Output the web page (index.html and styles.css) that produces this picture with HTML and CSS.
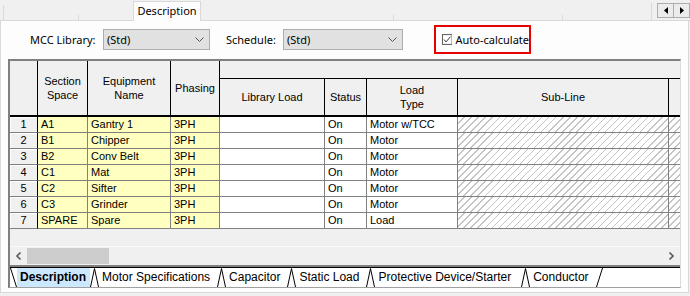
FILE: index.html
```html
<!DOCTYPE html>
<html lang="en">
<head>
    <meta charset="UTF-8">
    <title>MCC Description</title>
    <link rel="stylesheet" href="styles.css">
</head>
<body>

<div class="tabbar">
    <span class="ghost g1"></span>
    <span class="ghost g2"></span>
    <span class="ghost g3"></span>
    <span class="tab-active">Description</span>
    <span class="ghost g4"></span>
    <span class="ghost g5"></span>
    <span class="ghost g6"></span>
    <span class="ghost filler"></span>
    <div class="tab-scroll">
        <span class="sbtn"><svg width="4" height="7" viewBox="0 0 4 7"><path d="M4 0 L0 3.5 L4 7 Z" fill="#000"/></svg></span>
        <span class="sbtn"><svg width="4" height="7" viewBox="0 0 4 7"><path d="M0 0 L4 3.5 L0 7 Z" fill="#000"/></svg></span>
    </div>
</div>

<div class="panel">
    <div class="toolbar">
        <label class="lbl lbl-mcc">MCC Library:</label>
        <div class="combo combo-mcc">
            <span>(Std)</span>
            <svg width="9" height="5" viewBox="0 0 9 5"><polyline points="0.5,0.5 4.5,4.5 8.5,0.5" fill="none" stroke="#555" stroke-width="1"/></svg>
        </div>
        <label class="lbl lbl-sched">Schedule:</label>
        <div class="combo combo-sched">
            <span>(Std)</span>
            <svg width="9" height="5" viewBox="0 0 9 5"><polyline points="0.5,0.5 4.5,4.5 8.5,0.5" fill="none" stroke="#555" stroke-width="1"/></svg>
        </div>
        <div class="auto">
            <svg class="check" width="13" height="13" viewBox="0 0 13 13">
                <rect x="0.5" y="0.5" width="12" height="12" fill="#fff" stroke="#333"/>
                <polyline points="2.5,6.5 5,9.5 10.5,3" fill="none" stroke="#333" stroke-width="1.2"/>
            </svg>
            <span>Auto-calculate</span>
        </div>
    </div>

    <div class="grid">
        <div class="table-area">
            <div class="sheet">
                <div class="hd tall"></div>
                <div class="hd tall">Section<br>Space</div>
                <div class="hd tall">Equipment<br>Name</div>
                <div class="hd tall">Phasing</div>
                <div class="hd group"></div>
                <div class="hd low">Library Load</div>
                <div class="hd low">Status</div>
                <div class="hd low">Load<br>Type</div>
                <div class="hd low">Sub-Line</div>
                <div class="hd low last"></div>

                <div class="cell rn">1</div><div class="cell yl">A1</div><div class="cell yl">Gantry 1</div><div class="cell yl">3PH</div><div class="cell wh"></div><div class="cell wh">On</div><div class="cell wh">Motor w/TCC</div><div class="cell hatch"></div><div class="cell hatch last"></div>
                <div class="cell rn">2</div><div class="cell yl">B1</div><div class="cell yl">Chipper</div><div class="cell yl">3PH</div><div class="cell wh"></div><div class="cell wh">On</div><div class="cell wh">Motor</div><div class="cell hatch"></div><div class="cell hatch last"></div>
                <div class="cell rn">3</div><div class="cell yl">B2</div><div class="cell yl">Conv Belt</div><div class="cell yl">3PH</div><div class="cell wh"></div><div class="cell wh">On</div><div class="cell wh">Motor</div><div class="cell hatch"></div><div class="cell hatch last"></div>
                <div class="cell rn">4</div><div class="cell yl">C1</div><div class="cell yl">Mat</div><div class="cell yl">3PH</div><div class="cell wh"></div><div class="cell wh">On</div><div class="cell wh">Motor</div><div class="cell hatch"></div><div class="cell hatch last"></div>
                <div class="cell rn">5</div><div class="cell yl">C2</div><div class="cell yl">Sifter</div><div class="cell yl">3PH</div><div class="cell wh"></div><div class="cell wh">On</div><div class="cell wh">Motor</div><div class="cell hatch"></div><div class="cell hatch last"></div>
                <div class="cell rn">6</div><div class="cell yl">C3</div><div class="cell yl">Grinder</div><div class="cell yl">3PH</div><div class="cell wh"></div><div class="cell wh">On</div><div class="cell wh">Motor</div><div class="cell hatch"></div><div class="cell hatch last"></div>
                <div class="cell rn">7</div><div class="cell yl">SPARE</div><div class="cell yl">Spare</div><div class="cell yl">3PH</div><div class="cell wh"></div><div class="cell wh">On</div><div class="cell wh">Load</div><div class="cell hatch"></div><div class="cell hatch last"></div>
            </div>
        </div>

        <div class="hscroll">
            <span class="sb-btn"><svg width="5" height="8" viewBox="0 0 5 8"><polyline points="4.5,0.5 1,4 4.5,7.5" fill="none" stroke="#606060" stroke-width="1.6"/></svg></span>
            <div class="sb-track"><div class="sb-thumb"></div></div>
            <span class="sb-btn"><svg width="5" height="8" viewBox="0 0 5 8"><polyline points="0.5,0.5 4,4 0.5,7.5" fill="none" stroke="#606060" stroke-width="1.6"/></svg></span>
        </div>

        <div class="tabstrip">
            <div class="tabs">
                <svg class="sep" width="7" height="19" viewBox="0 0 7 19"><line x1="0.5" y1="0" x2="6.5" y2="19" stroke="#000"/></svg>
                <span class="stab active">Description</span>
                <svg class="sep" width="9" height="19" viewBox="0 0 9 19"><polyline points="0.5,19 4.5,0.5 8.5,19" fill="none" stroke="#000"/></svg>
                <span class="stab">Motor Specifications</span>
                <svg class="sep" width="9" height="19" viewBox="0 0 9 19"><polyline points="0.5,19 4.5,0.5 8.5,19" fill="none" stroke="#000"/></svg>
                <span class="stab">Capacitor</span>
                <svg class="sep" width="9" height="19" viewBox="0 0 9 19"><polyline points="0.5,19 4.5,0.5 8.5,19" fill="none" stroke="#000"/></svg>
                <span class="stab">Static Load</span>
                <svg class="sep" width="9" height="19" viewBox="0 0 9 19"><polyline points="0.5,19 4.5,0.5 8.5,19" fill="none" stroke="#000"/></svg>
                <span class="stab wide">Protective Device/Starter</span>
                <svg class="sep" width="9" height="19" viewBox="0 0 9 19"><polyline points="0.5,19 4.5,0.5 8.5,19" fill="none" stroke="#000"/></svg>
                <span class="stab">Conductor</span>
                <svg class="sep" width="8" height="19" viewBox="0 0 8 19"><line x1="0.5" y1="19" x2="6.5" y2="0" stroke="#000"/></svg>
            </div>
        </div>
    </div>
</div>

</body>
</html>
```

FILE: styles.css
```css
* {
    box-sizing: border-box;
}

body {
    margin: 0;
    width: 690px;
    height: 296px;
    overflow: hidden;
    background: #f0f0f0;
    font-family: "Noto Sans", sans-serif;
    font-size: 11px;
    color: #000;
}

/* top tab row */
.tabbar {
    display: flex;
    align-items: flex-end;
    height: 21px;
}

.ghost {
    border-bottom: 1px solid #d9d9d9;
    border-right: 1px solid #dadada;
}

.g1 { width: 4px; height: 16px; }
.g2 { width: 75px; height: 6px; }
.g3 { width: 54px; height: 1px; border-right: none; }
.g4 { width: 193px; height: 6px; }
.g5 { width: 169px; height: 6px; }
.g6 { width: 89px; height: 18px; }
.filler { flex: 1; height: 1px; border-right: none; }

.tab-active {
    width: 68px;
    height: 20px;
    background: #fdfdfd;
    border: 1px solid #d9d9d9;
    border-bottom: none;
    text-align: center;
    line-height: 18px;
}

.tab-scroll {
    display: flex;
    height: 21px;
    padding-top: 3px;
    border-bottom: 1px solid #d9d9d9;
}

.sbtn {
    display: flex;
    align-items: center;
    justify-content: center;
    width: 17px;
    height: 15px;
    background: #ececec;
    border: 1px solid #adadad;
}

.sbtn + .sbtn {
    margin-left: -1px;
}

/* page */
.panel {
    width: 689px;
    height: 272px;
    background: #fdfdfd;
    border: 1px solid #d9d9d9;
    border-top: none;
    padding-top: 4px;
}

.toolbar {
    display: flex;
    align-items: center;
    height: 29px;
    padding-left: 29px;
}

.lbl-mcc { width: 73px; }
.lbl-sched { width: 57px; margin-left: 16px; }

.combo {
    display: flex;
    align-items: center;
    justify-content: space-between;
    height: 21px;
    padding: 0 5px 0 3px;
    background: #e1e1e1;
    border: 1px solid #adadad;
}

.combo-mcc { width: 107px; }
.combo-sched { width: 120px; }

.auto {
    display: flex;
    align-items: center;
    gap: 3px;
    width: 97px;
    height: 29px;
    margin-left: 31px;
    padding-left: 6px;
    border: 2px solid #e60000;
    white-space: nowrap;
}

/* grid */
.grid {
    display: flex;
    flex-direction: column;
    width: 673px;
    height: 229px;
    margin: 5px 0 0 7px;
    border-top: 2px solid #808080;
    border-left: 2px solid #808080;
    border-right: 1px solid #dcdcdc;
    border-bottom: 1px solid #a0a0a0;
    background: #f0f0f0;
    font-family: "Liberation Sans", Arial, sans-serif;
}

.table-area {
    flex: 1;
}

.sheet {
    display: grid;
    grid-template-columns: 28px 50px 83px 49px 105px 42px 91px 211px 11px;
    grid-template-rows: 18px 38px repeat(7, 16px);
}

.hd {
    display: flex;
    align-items: center;
    justify-content: center;
    text-align: center;
    line-height: 14px;
    background: #f0f0f0;
    border-right: 1px solid #000;
    border-bottom: 2px solid #000;
}

.hd.tall { grid-row: span 2; }
.hd.group { grid-column: span 5; border-right: none; border-bottom-width: 1px; }
.hd.last { border-right: none; }

.cell {
    padding-left: 3px;
    line-height: 15px;
    white-space: nowrap;
    overflow: hidden;
    border-right: 1px solid #808080;
    border-bottom: 1px solid #808080;
}

.rn {
    padding: 0;
    text-align: center;
    background: #f0f0f0;
    border-right-color: #000;
    box-shadow: inset 1px 1px #fff;
}

.yl { background: #ffffc0; }
.wh { background: #fff; }

.hatch {
    background: repeating-linear-gradient(135deg, #fff 0 4px, #c4c4c4 4px 5px);
}

.cell.last { border-right: none; }

/* horizontal scroll bar */
.hscroll {
    display: flex;
    height: 19px;
    border-top: 1px solid #fafafa;
}

.sb-btn {
    display: flex;
    align-items: center;
    justify-content: center;
    width: 17px;
}

.sb-track {
    flex: 1;
    padding: 1px 0;
}

.sb-thumb {
    width: 82px;
    height: 16px;
    background: #cdcdcd;
}

/* sheet tabs */
.tabstrip {
    height: 22px;
    border-top: 2px solid #808080;
    background: #fff;
}

.tabs {
    display: flex;
    height: 20px;
    border-top: 1px solid #000;
    font-size: 12px;
}

.stab {
    padding: 0 7px 0 3px;
    line-height: 19px;
    white-space: nowrap;
}

.stab.wide {
    padding-right: 10px;
}

.stab.active {
    padding: 0 4px 0 3px;
    font-weight: bold;
    background: #cce8ff;
}

.sep {
    flex: none;
}
```
